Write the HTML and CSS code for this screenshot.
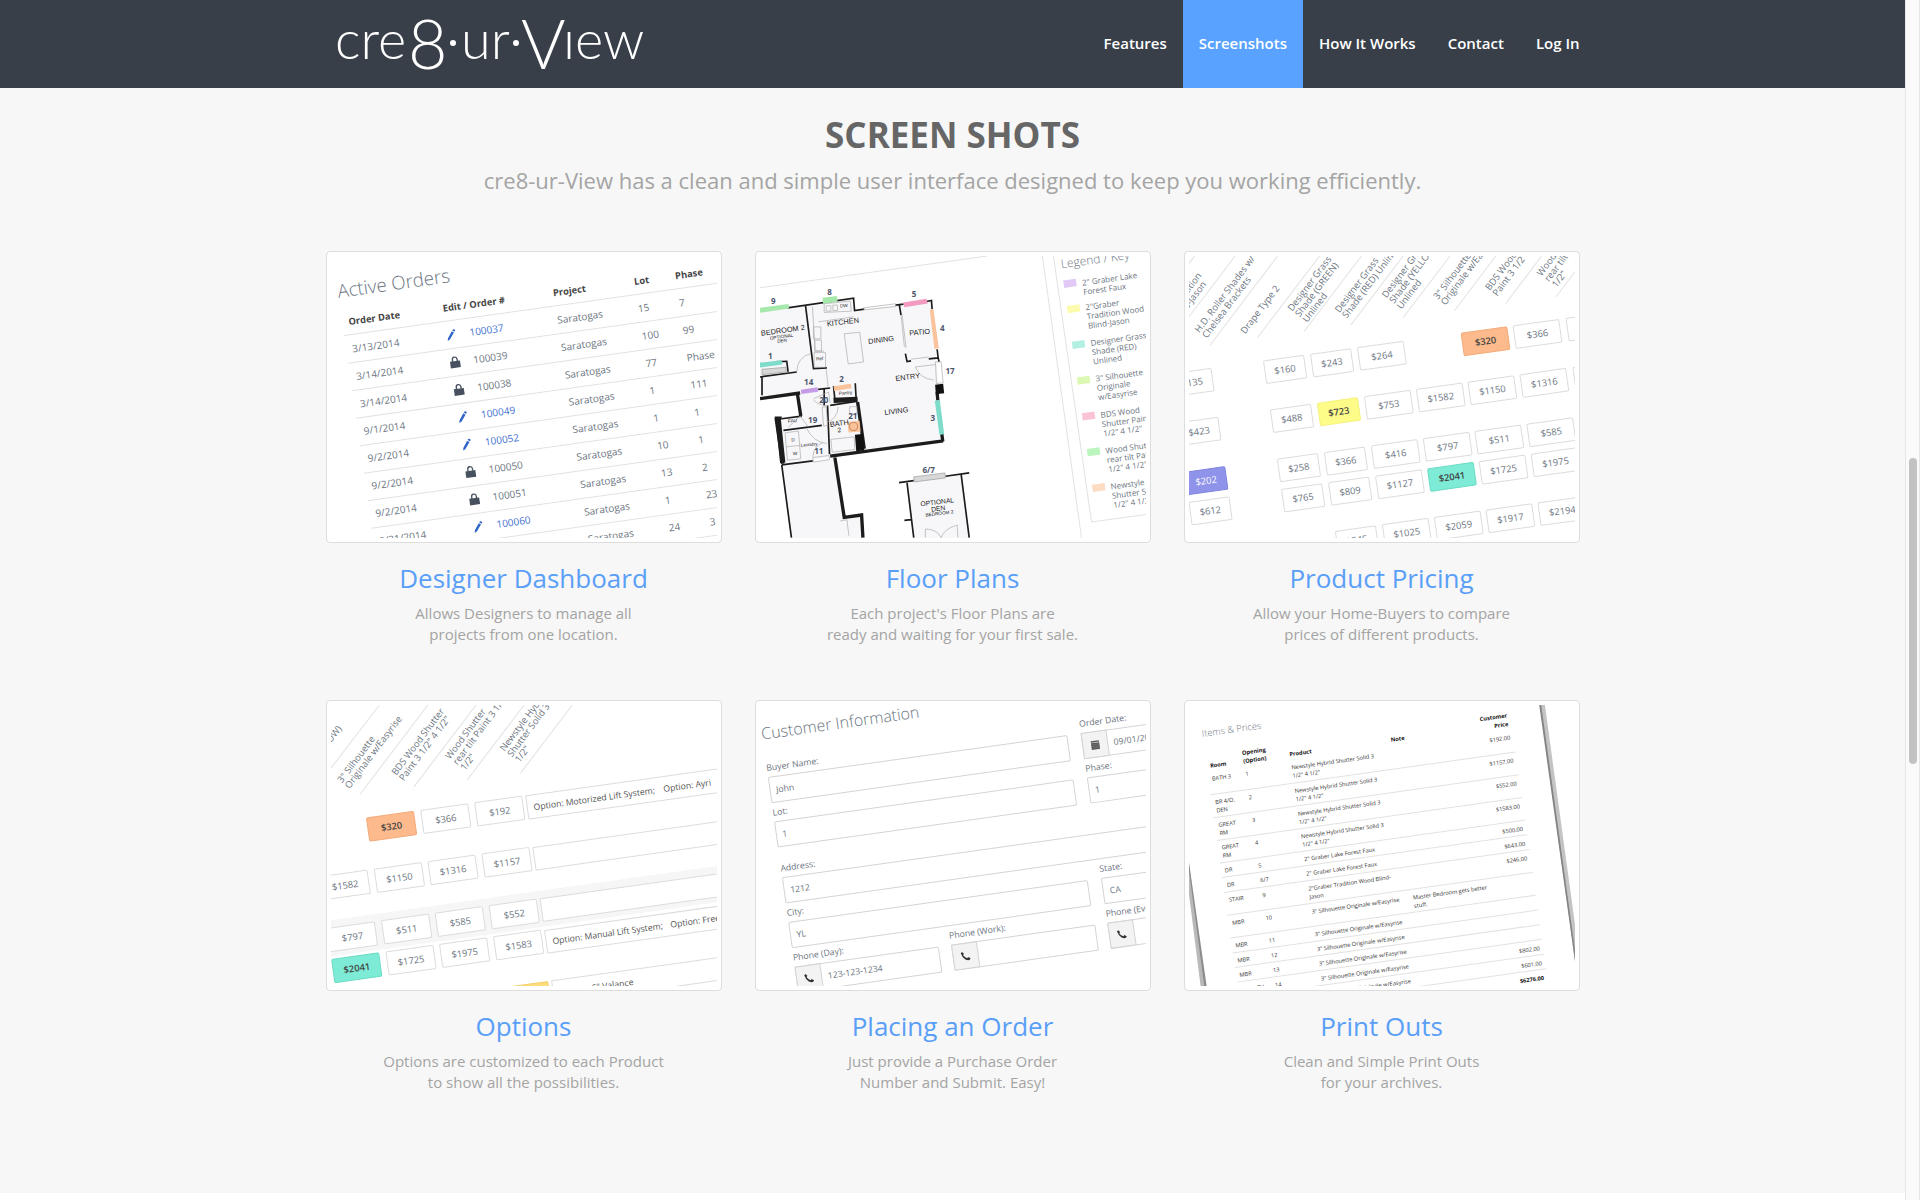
FILE: index.html
```html
<!DOCTYPE html>
<html lang="en">
<head>
<meta charset="utf-8">
<meta name="viewport" content="width=device-width, initial-scale=1">
<title>cre8-ur-View</title>
<link rel="stylesheet" href="styles.css">
</head>
<body>
<svg class="symbols" aria-hidden="true">
  <defs>
    <g id="pencil" fill="#2f66c8"><path d="M-13 15l2-8 14-19 6 5-15 19zM5-14l2-3q3-1 5 1 2 2 1 4l-2 3z"/></g>
    <g id="lock" fill="#46505e"><path d="M-15-3h30v20h-30z"/><path d="M-7-2v-6a7 7 0 0 1 14 0v6" fill="none" stroke="#46505e" stroke-width="4"/></g>
    <g id="phone"><path d="M-13-10l4-3 5 6-3 4q4 7 11 10l3-3 7 5-3 4q-5 2-13-3-9-7-11-20z" fill="#333"/></g>
  </defs>
</svg>
<div class="page">
  <header class="topbar">
    <div class="container topbar-inner">
      <a class="logo" href="#" aria-label="cre8-ur-View home">
        <svg viewBox="0 0 340 88" role="img" aria-label="cre8-ur-View">
          <g class="logo-small">
            <text x="9" y="59">cre</text>
            <text x="135" y="59">ur</text>
            <text x="237" y="59">ıew</text>
          </g>
          <g class="logo-big">
            <text x="82" y="69">8</text>
            <text x="195" y="69">V</text>
          </g>
          <circle cx="127" cy="43" r="3"/><circle cx="190" cy="43" r="3"/>
        </svg>
      </a>
      <nav class="nav">
        <a href="#features">Features</a>
        <a href="#screenshots" class="active">Screenshots</a>
        <a href="#how">How It Works</a>
        <a href="#contact">Contact</a>
        <a href="#login">Log In</a>
      </nav>
    </div>
  </header>

  <main class="shots" id="screenshots">
    <h1>SCREEN SHOTS</h1>
    <p class="lead">cre8-ur-View has a clean and simple user interface designed to keep you working efficiently.</p>
    <div class="container grid">

      <article class="card">
        <div class="thumb">
        <svg viewBox="33 33 1155 843">
          <g transform="translate(73 271) rotate(-8)">
            <text class="title" x="-2" y="-114">Active Orders</text>
            <text class="head" y="-29"><tspan x="18">Order Date</tspan><tspan x="303">Edit / Order #</tspan><tspan x="636">Project</tspan><tspan x="881">Lot</tspan><tspan x="1005">Phase</tspan></text>
            <path class="rule" stroke-width="4" d="M0 0H1200"/>
            <path class="rule" d="M0 84H1250M0 167H1250M0 250H1250M0 333H1250M0 416H1250M0 499H1250M0 582H1250M0 665H1250M0 747H1250"/>
            <g class="cell">
              <text y="54"><tspan x="18">3/13/2014</tspan><tspan class="blue" x="372">100037</tspan><tspan x="637">Saratogas</tspan><tspan x="881">15</tspan><tspan x="1005">7</tspan></text>
              <text y="137"><tspan x="18">3/14/2014</tspan><tspan x="372">100039</tspan><tspan x="637">Saratogas</tspan><tspan x="881">100</tspan><tspan x="1005">99</tspan></text>
              <text y="220"><tspan x="18">3/14/2014</tspan><tspan x="372">100038</tspan><tspan x="637">Saratogas</tspan><tspan x="881">77</tspan><tspan x="1005">Phase</tspan></text>
              <text y="302"><tspan x="18">9/1/2014</tspan><tspan class="blue" x="372">100049</tspan><tspan x="637">Saratogas</tspan><tspan x="881">1</tspan><tspan x="1005">111</tspan></text>
              <text y="385"><tspan x="18">9/2/2014</tspan><tspan class="blue" x="372">100052</tspan><tspan x="637">Saratogas</tspan><tspan x="881">1</tspan><tspan x="1005">1</tspan></text>
              <text y="468"><tspan x="18">9/2/2014</tspan><tspan x="372">100050</tspan><tspan x="637">Saratogas</tspan><tspan x="881">10</tspan><tspan x="1005">1</tspan></text>
              <text y="551"><tspan x="18">9/2/2014</tspan><tspan x="372">100051</tspan><tspan x="637">Saratogas</tspan><tspan x="881">13</tspan><tspan x="1005">2</tspan></text>
              <text y="634"><tspan x="18">9/21/2014</tspan><tspan class="blue" x="372">100060</tspan><tspan x="637">Saratogas</tspan><tspan x="881">1</tspan><tspan x="1005">23</tspan></text>
              <text y="716"><tspan x="637">Saratogas</tspan><tspan x="881">24</tspan><tspan x="1005">3</tspan></text>
            </g>
            <use href="#pencil" x="317" y="44"/><use href="#lock" x="317" y="125"/><use href="#lock" x="317" y="208"/><use href="#pencil" x="317" y="292"/><use href="#pencil" x="317" y="375"/><use href="#lock" x="317" y="456"/><use href="#lock" x="317" y="539"/><use href="#pencil" x="317" y="624"/>
          </g>
        </svg>
        </div>
        <h2>Designer Dashboard</h2>
        <p>Allows Designers to manage all<br>projects from one location.</p>
      </article>

      <article class="card">
        <div class="thumb">
        <svg viewBox="30 33 1155 843">
          <path class="rule" d="M30 128L710 33M875 33L992 876M908 33L1022 829L1190 806"/>
          <path fill="#f7f7fa" d="M30 200L166 180 310 160 313 198 543 165 578 590 240 636 95 655 78 518 150 508 146 450 30 462zM95 658L255 640 280 810 335 806 338 876H124zM470 712L632 688 656 876H490z"/>
          <g class="walls">
            <path stroke-width="5" d="M112 188L310 159 313 196 342 192M435 180L460 177M528 169L543 166 545 192M447 180L452 210M465 325L470 349 482 347M535 341L563 338 560 312M563 338L566 350M166 180L190 370 230 368M75 350L110 348 114 380M30 395L140 380M36 395V450M204 432L240 428M250 422L254 462M315 414L318 466M240 480L318 468M232 480L238 626M100 555L215 540M95 520L155 512M95 658L188 646M95 658L124 876M446 711L490 705M585 692L656 682M470 712L490 876M632 687L656 876M462 824L482 822M222 430V480"/>
            <path stroke-width="10" d="M30 460L150 443M142 446L152 512M78 518L98 655M74 518H95M240 632L578 586M254 636L282 815 334 808 338 876M322 470L342 610M560 440L562 465M574 566L577 588"/>
            <path stroke-width="16" d="M250 465L322 462M84 518L98 652"/>
            <path fill="#111" stroke="none" d="M554 418L578 415 581 444 556 447zM314 568L338 566 342 614 318 617z"/>
          </g>
          <path class="thin" d="M282 266L328 261 340 350 294 356zM187 185L195 315 222 318M222 176L300 168 303 198 222 202zM228 182h14v16h-14zM248 180h14v16h-14zM205 230L310 215M190 245h22v36h-22zM194 285h20v34h-20zM192 322h34v44h-34zM452 210L462 305M455 208L467 308M140 378Q142 335 182 325M495 365L555 358M495 365Q508 400 550 404M555 350L572 349 578 412 558 415zM216 486L228 484 232 540 220 542zM264 484Q262 520 230 530M298 484h22v22h-22zM242 582L312 574 314 612 246 620zM105 562L145 557 152 640 112 644zM108 604L148 600M170 550Q190 590 230 594M188 636L236 630 238 642 190 650zM188 634Q192 600 218 592M115 545L150 512M150 512L175 545M190 460L235 440 240 472M190 464Q205 480 236 482M228 372L234 424M340 188L435 176 437 184 342 194zM482 342L535 335M270 826L290 822 296 870M525 850Q560 850 572 876M620 838Q580 850 572 876M525 850V876M620 838L622 876"/>
          <path class="window" d="M490 694L583 682 585 697 492 709zM36 372L108 366 108 380 36 388z"/>
          <path fill="#a6e8ab" d="M30 188L115 177 117 190 30 203zM217 158L260 153 262 170 219 176z"/>
          <path fill="#f29ac0" d="M458 172L528 161 532 175 462 186z"/>
          <path fill="#fbc39b" d="M538 194L549 192 565 308 552 311zM250 423L302 415 304 429 252 437zM292 530L328 526 331 558 295 561z"/>
          <path fill="#7fdcca" d="M30 352L95 345 97 358 30 367zM553 466L568 464 581 566 567 569z"/>
          <path fill="#c69be8" d="M152 433L202 426 204 439 154 446z"/>
          <g class="plan">
            <text transform="translate(34 272) rotate(-8)">BEDROOM 2</text>
            <text class="tiny" transform="translate(60 284) rotate(-8)">OPTIONAL</text>
            <text class="tiny" transform="translate(82 293) rotate(-8)">DEN</text>
            <text transform="translate(231 244) rotate(-7)">KITCHEN</text>
            <text transform="translate(355 296) rotate(-7)">DINING</text>
            <text transform="translate(477 271) rotate(-5)">PATIO</text>
            <text transform="translate(436 407) rotate(-7)">ENTRY</text>
            <text transform="translate(403 509) rotate(-7)">LIVING</text>
            <text transform="translate(240 545) rotate(-8)">BATH</text>
            <text class="small" transform="translate(263 561) rotate(-8)">2</text>
            <text class="tiny" transform="translate(266 449) rotate(-5)">Pantry</text>
            <text class="tiny" transform="translate(198 346) rotate(-5)">Ref</text>
            <text class="tiny" transform="translate(152 604) rotate(-5)">Laundry</text>
            <text class="tiny" transform="translate(114 532) rotate(-5)">FAU</text>
            <text class="tiny" transform="translate(124 588) rotate(-5)">D</text>
            <text class="tiny" transform="translate(129 629) rotate(-5)">W</text>
            <text class="tiny" transform="translate(270 187) rotate(-5)">DW</text>
            <text class="small" transform="translate(511 782) rotate(-7)">OPTIONAL</text>
            <text class="small" transform="translate(543 798) rotate(-7)">DEN</text>
            <text class="tiny" transform="translate(526 813) rotate(-7)">BEDROOM 2</text>
          </g>
          <g class="mark">
            <text x="63" y="176">9</text><text x="231" y="150">8</text><text x="484" y="157">5</text><text x="569" y="256">4</text><text x="54" y="340">1</text><text x="162" y="420">14</text><text x="267" y="410">2</text><text x="585" y="385">17</text><text x="207" y="473">20</text><text x="174" y="534">19</text><text x="294" y="521">21</text><text x="540" y="528">3</text><text x="192" y="625">11</text><text x="516" y="681">6/7</text>
          </g>
          <circle cx="310" cy="543" r="12" fill="none" stroke="#b06a3c" stroke-width="2"/>
          <g transform="translate(932 70) rotate(-8)">
            <text class="subtitle" x="0" y="0">Legend / Key</text>
            <g class="legend">
              <text><tspan x="55" y="60">2" Graber Lake</tspan><tspan x="55" y="88">Forest Faux</tspan></text>
              <text><tspan x="55" y="134">2"Graber</tspan><tspan x="55" y="162">Tradition Wood</tspan><tspan x="55" y="190">Blind-Jason</tspan></text>
              <text><tspan x="55" y="242">Designer Grass</tspan><tspan x="55" y="270">Shade (RED)</tspan><tspan x="55" y="298">Unlined</tspan></text>
              <text><tspan x="55" y="350">3" Silhouette</tspan><tspan x="55" y="378">Originale</tspan><tspan x="55" y="406">w/Easyrise</tspan></text>
              <text><tspan x="55" y="460">BDS Wood</tspan><tspan x="55" y="488">Shutter Paint 3</tspan><tspan x="55" y="516">1/2" 4 1/2"</tspan></text>
              <text><tspan x="55" y="568">Wood Shutter</tspan><tspan x="55" y="596">rear tilt Paint 3</tspan><tspan x="55" y="624">1/2" 4 1/2"</tspan></text>
              <text><tspan x="55" y="676">Newstyle Hybrid</tspan><tspan x="55" y="704">Shutter Solid 3</tspan><tspan x="55" y="732">1/2" 4 1/2"</tspan></text>
            </g>
            <path fill="#e2c8f7" d="M0 37h38v22h-38z"/><path fill="#fdfbae" d="M0 114h38v22h-38z"/><path fill="#b2f0e2" d="M0 222h38v22h-38z"/><path fill="#dbf8b4" d="M0 330h38v22h-38z"/><path fill="#fbc3d7" d="M0 438h38v22h-38z"/><path fill="#b9f5bd" d="M0 546h38v22h-38z"/><path fill="#fddcc2" d="M0 654h38v22h-38z"/>
          </g>
        </svg>
        </div>
        <h2>Floor Plans</h2>
        <p>Each project's Floor Plans are<br>ready and waiting for your first sale.</p>
      </article>

      <article class="card">
        <div class="thumb">
        <svg viewBox="27 33 1155 843">
          <path class="rule" d="M27 215L165 33M90 300L292 33M232 277L418 33M372 258L543 33M511 240L668 33M668 217L808 33M822 196L945 33M975 175L1082 33M1125 155L1182 80M27 55L44 33"/>
          <g class="slant">
            <text transform="translate(66 92) rotate(-53)" text-anchor="end">Tradition</text>
            <text transform="translate(80 118) rotate(-53)" text-anchor="end">Blind-Jason</text>
            <text transform="translate(58 264) rotate(-53)">H.D. Roller Shades w/<tspan x="0" y="28">Chelsea Brackets</tspan></text>
            <text transform="translate(195 268) rotate(-53)">Drape Type 2</text>
            <text transform="translate(336 200) rotate(-53)">Designer Grass<tspan x="0" y="28">Shade (GREEN)</tspan><tspan x="0" y="56">Unlined</tspan></text>
            <text transform="translate(477 204) rotate(-53)">Designer Grass<tspan x="0" y="28">Shade (RED) Unlined</tspan></text>
            <text transform="translate(618 160) rotate(-53)">Designer Grass<tspan x="0" y="28">Shade (YELLOW)</tspan><tspan x="0" y="56">Unlined</tspan></text>
            <text transform="translate(772 165) rotate(-53)">3" Silhouette<tspan x="0" y="28">Originale w/Easyrise</tspan></text>
            <text transform="translate(927 138) rotate(-53)">BDS Wood Shutter<tspan x="0" y="28">Paint 3 1/2" 4 1/2"</tspan></text>
            <text transform="translate(1082 95) rotate(-53)">Wood Shutter<tspan x="0" y="28">rear tilt Paint 3</tspan><tspan x="0" y="56">1/2"</tspan></text>
          </g>
          <g transform="translate(250 347) rotate(-8)">
            <g class="box">
              <rect x="-280" y="0" width="121" height="68" rx="4"/><rect x="0" y="0" width="121" height="68" rx="4"/><rect x="142" y="0" width="121" height="68" rx="4"/><rect x="284" y="0" width="138" height="68" rx="4"/><rect class="orange" x="597" y="0" width="138" height="68" rx="4"/><rect x="754" y="0" width="138" height="68" rx="4"/><rect x="914" y="0" width="138" height="68" rx="4"/>
              <rect x="-280" y="148" width="121" height="68" rx="4"/><rect x="0" y="148" width="121" height="68" rx="4"/><rect class="yellow" x="142" y="148" width="121" height="68" rx="4"/><rect x="284" y="148" width="138" height="68" rx="4"/><rect x="441" y="148" width="138" height="68" rx="4"/><rect x="597" y="148" width="138" height="68" rx="4"/><rect x="754" y="148" width="138" height="68" rx="4"/><rect x="914" y="148" width="138" height="68" rx="4"/>
              <rect class="violet" x="-280" y="297" width="121" height="68" rx="4"/><rect x="0" y="297" width="121" height="68" rx="4"/><rect x="142" y="297" width="121" height="68" rx="4"/><rect x="284" y="297" width="138" height="68" rx="4"/><rect x="441" y="297" width="138" height="68" rx="4"/><rect x="597" y="297" width="138" height="68" rx="4"/><rect x="754" y="297" width="138" height="68" rx="4"/>
              <rect x="-422" y="388" width="121" height="68" rx="4"/><rect x="-280" y="388" width="121" height="68" rx="4"/><rect x="0" y="388" width="121" height="68" rx="4"/><rect x="142" y="388" width="121" height="68" rx="4"/><rect x="284" y="388" width="138" height="68" rx="4"/><rect class="teal" x="441" y="388" width="138" height="68" rx="4"/><rect x="597" y="388" width="138" height="68" rx="4"/><rect x="754" y="388" width="138" height="68" rx="4"/>
              <rect x="142" y="535" width="121" height="68" rx="4"/><rect x="284" y="535" width="138" height="68" rx="4"/><rect x="441" y="535" width="138" height="68" rx="4"/><rect x="597" y="535" width="138" height="68" rx="4"/><rect x="754" y="535" width="138" height="68" rx="4"/>
            </g>
            <g class="price">
              <text y="44"><tspan x="-220">$135</tspan><tspan x="60">$160</tspan><tspan x="202">$243</tspan><tspan x="353">$264</tspan><tspan class="on" x="666">$320</tspan><tspan x="823">$366</tspan></text>
              <text y="192"><tspan x="-220">$423</tspan><tspan x="60">$488</tspan><tspan class="on" x="202">$723</tspan><tspan x="353">$753</tspan><tspan x="510">$1582</tspan><tspan x="666">$1150</tspan><tspan x="823">$1316</tspan></text>
              <text y="341"><tspan class="white" x="-220">$202</tspan><tspan x="60">$258</tspan><tspan x="202">$366</tspan><tspan x="353">$416</tspan><tspan x="510">$797</tspan><tspan x="666">$511</tspan><tspan x="823">$585</tspan></text>
              <text y="432"><tspan x="-220">$612</tspan><tspan x="60">$765</tspan><tspan x="202">$809</tspan><tspan x="353">$1127</tspan><tspan class="on" x="510">$2041</tspan><tspan x="666">$1725</tspan><tspan x="823">$1975</tspan></text>
              <text y="579"><tspan x="202">$545</tspan><tspan x="353">$1025</tspan><tspan x="510">$2059</tspan><tspan x="666">$1917</tspan><tspan x="823">$2194</tspan></text>
            </g>
          </g>
        </svg>
        </div>
        <h2>Product Pricing</h2>
        <p>Allow your Home-Buyers to compare<br>prices of different products.</p>
      </article>

      <article class="card">
        <div class="thumb">
        <svg viewBox="33 33 1155 843">
          <path class="rule" d="M33 222L178 33M120 300L323 33M281 278L467 33M440 258L611 33M600 237L755 33"/>
          <g class="slant">
            <text transform="translate(66 104) rotate(-53)" text-anchor="end">(YELLOW)</text>
            <text transform="translate(66 268) rotate(-53)">3" Silhouette<tspan x="0" y="28">Originale w/Easyrise</tspan></text>
            <text transform="translate(228 245) rotate(-53)">BDS Wood Shutter<tspan x="0" y="28">Paint 3 1/2" 4 1/2"</tspan></text>
            <text transform="translate(389 197) rotate(-53)">Wood Shutter<tspan x="0" y="28">rear tilt Paint 3 1/2"</tspan><tspan x="0" y="56">1/2"</tspan></text>
            <text transform="translate(552 173) rotate(-53)">Newstyle Hybrid<tspan x="0" y="28">Shutter Solid 3 1/2"</tspan><tspan x="0" y="56">1/2"</tspan></text>
          </g>
          <g transform="translate(139 371) rotate(-8)">
            <path fill="#f6f6f6" d="M-200 288H1300V396H-200z"/>
            <g class="box">
              <rect class="orange" x="0" y="0" width="142" height="70" rx="4"/><rect x="164" y="0" width="142" height="70" rx="4"/><rect x="327" y="0" width="142" height="70" rx="4"/><rect x="481" y="1" width="800" height="70" rx="2"/>
              <rect x="-162" y="155" width="142" height="70" rx="4"/><rect x="2" y="155" width="142" height="70" rx="4"/><rect x="164" y="155" width="142" height="70" rx="4"/><rect x="327" y="155" width="142" height="70" rx="4"/><rect x="481" y="157" width="800" height="68" rx="2"/>
              <rect x="-162" y="311" width="142" height="70" rx="4"/><rect x="2" y="311" width="142" height="70" rx="4"/><rect x="164" y="311" width="142" height="70" rx="4"/><rect x="327" y="311" width="142" height="70" rx="4"/><rect x="481" y="312" width="800" height="68" rx="2"/>
              <rect class="teal" x="-162" y="405" width="142" height="70" rx="4"/><rect x="2" y="405" width="142" height="70" rx="4"/><rect x="164" y="405" width="142" height="70" rx="4"/><rect x="327" y="405" width="142" height="70" rx="4"/><rect x="481" y="408" width="800" height="68" rx="2"/>
              <rect class="gold" x="327" y="560" width="142" height="70" rx="4"/><rect x="481" y="560" width="800" height="68" rx="2"/>
            </g>
            <g class="price">
              <text y="46"><tspan class="on" x="71">$320</tspan><tspan x="235">$366</tspan><tspan x="398">$192</tspan></text>
              <text y="201"><tspan x="-91">$1582</tspan><tspan x="73">$1150</tspan><tspan x="235">$1316</tspan><tspan x="398">$1157</tspan></text>
              <text y="357"><tspan x="-91">$797</tspan><tspan x="73">$511</tspan><tspan x="235">$585</tspan><tspan x="398">$552</tspan></text>
              <text y="451"><tspan class="on" x="-91">$2041</tspan><tspan x="73">$1725</tspan><tspan x="235">$1975</tspan><tspan x="398">$1583</tspan></text>
            </g>
            <g class="option">
              <text x="500" y="47">Option: Motorized Lift System;</text><text x="892" y="47">Option: Ayri</text>
              <text x="500" y="452">Option: Manual Lift System;</text><text x="856" y="452">Option: Free</text>
              <text x="500" y="606">Option: 6" Valance</text>
            </g>
          </g>
        </svg>
        </div>
        <h2>Options</h2>
        <p>Options are customized to each Product<br>to show all the possibilities.</p>
      </article>

      <article class="card">
        <div class="thumb">
        <svg viewBox="30 33 1155 843">
          <g transform="translate(55 250) rotate(-8)">
            <text class="title title-form" x="-3" y="-115">Customer Information</text>
            <g class="field">
              <rect x="0" y="0" width="902" height="76" rx="4"/><rect x="0" y="134" width="902" height="76" rx="4"/>
              <rect x="0" y="303" width="1300" height="76" rx="4"/><rect x="0" y="438" width="902" height="76" rx="4"/>
              <rect x="945" y="0" width="300" height="76" rx="4"/><rect x="945" y="134" width="300" height="76" rx="4"/><rect x="945" y="438" width="300" height="76" rx="4"/>
              <rect x="0" y="573" width="433" height="76" rx="4"/><rect x="473" y="573" width="433" height="76" rx="4"/><rect x="945" y="573" width="300" height="76" rx="4"/>
              <path class="addon" d="M945 0h75v76h-75zM0 573h75v76h-75zM473 573h75v76h-75zM945 573h75v76h-75z"/>
            </g>
            <path fill="#555" d="M970 27h25v4h-25zM970 33h25v20h-25z"/><path stroke="#999" stroke-width="1" d="M970 38h25M970 43h25M970 48h25"/>
            <use href="#phone" x="37" y="611"/><use href="#phone" x="510" y="611"/><use href="#phone" x="982" y="611"/>
            <g class="label">
              <text x="-2" y="-20">Buyer Name:</text><text x="943" y="-20">Order Date:</text>
              <text x="-2" y="115">Lot:</text><text x="943" y="115">Phase:</text>
              <text x="-2" y="284">Address:</text>
              <text x="-2" y="418">City:</text><text x="943" y="418">State:</text>
              <text x="-2" y="553">Phone (Day):</text><text x="470" y="553">Phone (Work):</text><text x="943" y="553">Phone (Eve):</text>
              <text x="18" y="48">John</text><text x="1038" y="48">09/01/2014</text>
              <text x="18" y="182">1</text><text x="963" y="182">1</text>
              <text x="18" y="351">1212</text><text x="18" y="486">YL</text><text x="965" y="486">CA</text>
              <text x="94" y="621">123-123-1234</text>
            </g>
          </g>
        </svg>
        </div>
        <h2>Placing an Order</h2>
        <p>Just provide a Purchase Order<br>Number and Submit. Easy!</p>
      </article>

      <article class="card">
        <div class="thumb">
        <svg viewBox="27 33 1155 843">
          <path fill="#b9b9b9" d="M27 505L76 876H62L27 600z"/><path fill="#8c8c8c" d="M27 505L80 876H73L27 530z"/>
          <path fill="#c4c4c4" d="M1077 33H1092L1182 690V800z"/><path fill="#858585" d="M1075 33H1081L1182 765V800z"/>
          <g transform="translate(91 221) rotate(-8)">
            <text class="doc-title" x="-11" y="-95">Items &amp; Prices</text>
            <path class="rule" d="M-11 80H911M-11 149H911M-11 218H911M-11 286H911M-11 330H911M-11 375H911M-11 444H911M-11 513H911M-11 558H911M-11 602H911M-11 646H911M-11 691H911M-11 735H911"/>
            <g class="doc doc-bold">
              <text x="0" y="0">Room</text><text x="100" y="-25">Opening</text><text x="100" y="0">(Option)</text><text x="240" y="-1">Product</text><text x="546" y="-2">Note</text>
              <text class="end" x="901" y="-26">Customer</text><text class="end" x="901" y="0">Price</text><text class="end" x="901" y="767">$6276.00</text>
            </g>
            <g class="doc">
              <text y="39"><tspan x="0">BATH 3</tspan><tspan x="101">1</tspan><tspan x="240">Newstyle Hybrid Shutter Solid 3</tspan><tspan x="240" y="64">1/2" 4 1/2"</tspan></text>
              <text y="110"><tspan x="0">BR 4/O.</tspan><tspan x="101">2</tspan><tspan x="240">Newstyle Hybrid Shutter Solid 3</tspan><tspan x="0" y="135">DEN</tspan><tspan x="240" y="135">1/2" 4 1/2"</tspan></text>
              <text y="179"><tspan x="0">GREAT</tspan><tspan x="101">3</tspan><tspan x="240">Newstyle Hybrid Shutter Solid 3</tspan><tspan x="0" y="204">RM</tspan><tspan x="240" y="204">1/2" 4 1/2"</tspan></text>
              <text y="247"><tspan x="0">GREAT</tspan><tspan x="101">4</tspan><tspan x="240">Newstyle Hybrid Shutter Solid 3</tspan><tspan x="0" y="272">RM</tspan><tspan x="240" y="272">1/2" 4 1/2"</tspan></text>
              <text y="316"><tspan x="0">DR</tspan><tspan x="101">5</tspan><tspan x="240">2" Graber Lake Forest Faux</tspan></text>
              <text y="360"><tspan x="0">DR</tspan><tspan x="101">6/7</tspan><tspan x="240">2" Graber Lake Forest Faux</tspan></text>
              <text y="405"><tspan x="0">STAIR</tspan><tspan x="101">9</tspan><tspan x="240">2"Graber Tradition Wood Blind-</tspan><tspan x="240" y="430">Jason</tspan></text>
              <text y="475"><tspan x="0">MBR</tspan><tspan x="101">10</tspan><tspan x="240">3" Silhouette Originale w/Easyrise</tspan><tspan x="546">Master Bedroom gets better</tspan><tspan x="546" y="500">stuff.</tspan></text>
              <text y="543"><tspan x="0">MBR</tspan><tspan x="101">11</tspan><tspan x="240">3" Silhouette Originale w/Easyrise</tspan></text>
              <text y="588"><tspan x="0">MBR</tspan><tspan x="101">12</tspan><tspan x="240">3" Silhouette Originale w/Easyrise</tspan></text>
              <text y="632"><tspan x="0">MBR</tspan><tspan x="101">13</tspan><tspan x="240">3" Silhouette Originale w/Easyrise</tspan></text>
              <text y="677"><tspan x="36">BTH</tspan><tspan x="101">14</tspan><tspan x="240">3" Silhouette Originale w/Easyrise</tspan></text>
              <text y="721"><tspan x="240">3" Silhouette Originale w/Easyrise</tspan></text>
              <g class="end"><text x="901" y="41">$192.00</text><text x="901" y="111">$1157.00</text><text x="901" y="180">$552.00</text><text x="901" y="249">$1583.00</text><text x="901" y="317">$500.00</text><text x="901" y="362">$643.00</text><text x="901" y="406">$246.00</text><text x="901" y="678">$802.00</text><text x="901" y="723">$601.00</text></g>
            </g>
          </g>
        </svg>
        </div>
        <h2>Print Outs</h2>
        <p>Clean and Simple Print Outs<br>for your archives.</p>
      </article>
    </div>
  </main>
</div>
<aside class="scrollbar" aria-hidden="true"><div class="scroll-thumb"></div></aside>
</body>
</html>
```
FILE: styles.css
```css
* { box-sizing: border-box; }

body {
  margin: 0;
  display: grid;
  grid-template-columns: minmax(0, 1fr) 15px;
  height: 100vh;
  overflow: hidden;
  background: #fff;
  color: #a4a4a4;
  font-family: "Open Sans", "Liberation Sans", sans-serif;
}

.symbols { position: absolute; width: 0; height: 0; }

.container { width: 100%; max-width: 1254px; margin: 0 auto; }

/* Top bar */
.topbar { background: #383f49; }
.topbar-inner { display: flex; justify-content: space-between; }
.logo { width: 340px; height: 88px; color: #fff; }
.logo svg { display: block; width: 100%; height: 100%; fill: #fff; }
.logo-small { font: 300 54px Lato, sans-serif; }
.logo-big { font: 300 68px Lato, sans-serif; }
.nav { display: flex; margin-right: -16px; }
.nav a {
  padding: 0 16px 2px;
  color: #fff;
  font-size: 15px;
  font-weight: 600;
  line-height: 86px;
  text-decoration: none;
}
.nav .active { background: #59a2ff; }

/* Gallery */
.shots { padding: 20px 0 100px; background: #f7f7f7; text-align: center; }
h1 { margin: 0; color: #666; font-size: 35px; font-weight: 700; line-height: 54px; }
.lead { margin: 0; font-size: 22px; line-height: 36px; }
.grid {
  display: grid;
  grid-template-columns: repeat(3, minmax(0, 1fr));
  gap: 55px 33px;
  margin-top: 53px;
}
.thumb { padding: 4px; border: 1px solid #ddd; border-radius: 4px; background: #fff; }
.thumb svg { display: block; width: 100%; }
.card h2 { margin: 15px 0 0; color: #5a9ff7; font-size: 26px; font-weight: 400; line-height: 40px; }
.card p { margin: 5px 0 0; font-size: 15px; line-height: 21px; }

/* Thumbnail drawings */
.thumb text { fill: #6c7581; }
.rule { fill: none; stroke: #e2e2e2; stroke-width: 3; }
.title { font-size: 56px; font-weight: 300; }
.title-form { font-size: 48px; }
.subtitle { font-size: 36px; font-weight: 300; }
.thumb .head { fill: #444; font-size: 28px; font-weight: 700; }
.cell { font-size: 30px; }
.cell .blue { fill: #3f70d0; }
.slant { font-size: 28px; }
.legend { font-size: 24px; }
.label { font-size: 26px; }
.thumb .option text { fill: #555; font-size: 26px; }
.price { font-size: 28px; text-anchor: middle; }
.price .on { fill: #444; font-weight: 600; }
.price .white { fill: #fff; }
.box rect { fill: #fff; stroke: #dcdcdc; stroke-width: 3; }
.box .orange { fill: #fdba8c; stroke: #f2ab7a; }
.box .yellow { fill: #fefc88; stroke: #f5f07c; }
.box .violet { fill: #8f94ea; stroke: #7f85e0; }
.box .teal { fill: #7debd5; stroke: #6bdcc5; }
.box .gold { fill: #ffdc7c; stroke: #f3cf6c; }
.field rect { fill: #fff; stroke: #d4d4d4; stroke-width: 3; }
.field .addon { fill: #f3f3f3; stroke: #d4d4d4; stroke-width: 3; }
.walls { fill: none; stroke: #1c1c1c; }
.thin { fill: none; stroke: #aaa; stroke-width: 2; }
.window { fill: #d8d8d8; stroke: #999; stroke-width: 2; }
.thumb .plan text { fill: #222; }
.plan { font: 22px "Liberation Sans", sans-serif; }
.plan .small { font-size: 20px; }
.plan .tiny { font-size: 14px; }
.thumb .mark text { fill: #4b566b; }
.mark { font-size: 24px; font-weight: 700; }
.thumb .doc text { fill: #333; }
.thumb .doc-bold text { fill: #111; font-weight: 700; }
.doc { font-size: 17px; }
.doc-title { font-size: 28px; font-weight: 300; }
.end { text-anchor: end; }

/* Scroll track */
.scrollbar {
  display: grid;
  grid-template-rows: 458fr 306fr 436fr;
  justify-items: center;
  border: solid #e6e6e6;
  border-width: 0 1px;
  background: #fafafa;
}
.scroll-thumb { grid-row: 2; width: 8px; border-radius: 4px; background: #c2c2c2; }
```
